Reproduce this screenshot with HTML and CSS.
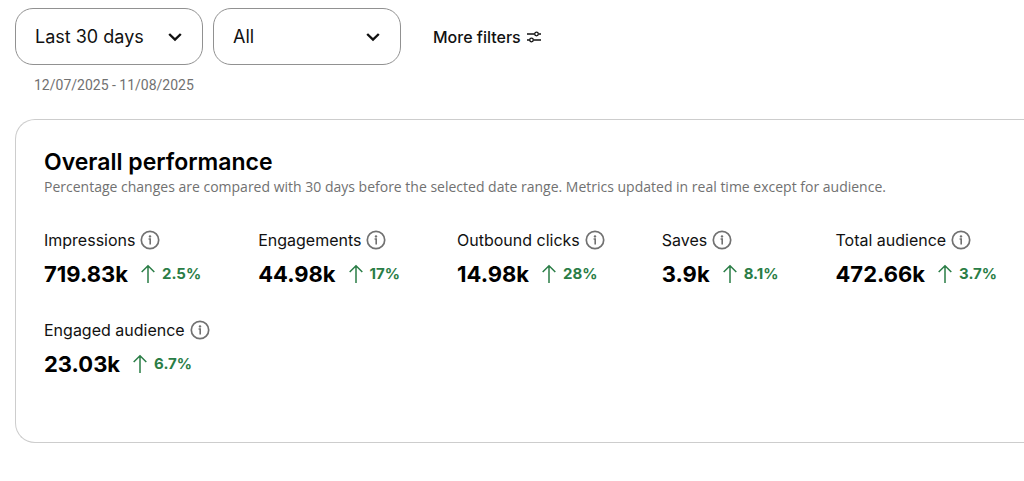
FILE: index.html
```html
<!DOCTYPE html>
<html lang="en">
<head>
  <meta charset="UTF-8">
  <meta name="viewport" content="width=device-width, initial-scale=1">
  <title>Analytics overview</title>
  <link rel="stylesheet" href="styles.css">
</head>
<body>

<!-- shared icons -->
<svg class="icon-defs" aria-hidden="true">
  <symbol id="chevron" viewBox="0 0 14 10">
    <path d="M1.2 2 L7 7.5 L12.8 2" fill="none" stroke="currentColor" stroke-width="2.4"/>
  </symbol>
  <symbol id="sliders" viewBox="0 0 16 12">
    <g fill="none" stroke="currentColor" stroke-width="1.3">
      <path d="M1 3 H8.5 M12.5 3 H15 M1 9 H3.5 M7.5 9 H15"/>
      <circle cx="10.5" cy="3" r="1.8"/>
      <circle cx="5.5" cy="9" r="1.8"/>
    </g>
  </symbol>
  <symbol id="info" viewBox="0 0 20 20">
    <circle cx="10" cy="10" r="8.7" fill="none" stroke="currentColor" stroke-width="1.7"/>
    <circle cx="10" cy="6.4" r="1.2" fill="currentColor"/>
    <path d="M8.6 9 H10.2 V14.4" fill="none" stroke="currentColor" stroke-width="1.6"/>
  </symbol>
  <symbol id="up" viewBox="0 0 14 20">
    <path d="M7 19 V2 M.7 8 L7 1.7 L13.3 8" fill="none" stroke="currentColor" stroke-width="1.5"/>
  </symbol>
</svg>

<div class="filters">
  <div class="select-box">
    <select aria-label="Date range">
      <option>Last 30 days</option>
    </select>
    <svg class="chevron"><use href="#chevron"/></svg>
  </div>
  <div class="select-box">
    <select aria-label="Content type">
      <option>All</option>
    </select>
    <svg class="chevron"><use href="#chevron"/></svg>
  </div>
  <button class="more-filters" type="button">
    More filters
    <svg class="sliders"><use href="#sliders"/></svg>
  </button>
</div>
<p class="date-range">12/07/2025 - 11/08/2025</p>

<section class="card">
  <h1>Overall performance</h1>
  <p class="note">Percentage changes are compared with 30 days before the selected date range. Metrics updated in real time except for audience.</p>

  <div class="metrics">
    <div class="metric">
      <div class="label">Impressions <button class="info" type="button" aria-label="About impressions"><svg><use href="#info"/></svg></button></div>
      <div class="value">719.83k <span class="change"><svg><use href="#up"/></svg>2.5%</span></div>
    </div>
    <div class="metric">
      <div class="label">Engagements <button class="info" type="button" aria-label="About engagements"><svg><use href="#info"/></svg></button></div>
      <div class="value">44.98k <span class="change"><svg><use href="#up"/></svg>17%</span></div>
    </div>
    <div class="metric">
      <div class="label">Outbound clicks <button class="info" type="button" aria-label="About outbound clicks"><svg><use href="#info"/></svg></button></div>
      <div class="value">14.98k <span class="change"><svg><use href="#up"/></svg>28%</span></div>
    </div>
    <div class="metric">
      <div class="label">Saves <button class="info" type="button" aria-label="About saves"><svg><use href="#info"/></svg></button></div>
      <div class="value">3.9k <span class="change"><svg><use href="#up"/></svg>8.1%</span></div>
    </div>
    <div class="metric">
      <div class="label">Total audience <button class="info" type="button" aria-label="About total audience"><svg><use href="#info"/></svg></button></div>
      <div class="value">472.66k <span class="change"><svg><use href="#up"/></svg>3.7%</span></div>
    </div>
    <div class="metric">
      <div class="label">Engaged audience <button class="info" type="button" aria-label="About engaged audience"><svg><use href="#info"/></svg></button></div>
      <div class="value">23.03k <span class="change"><svg><use href="#up"/></svg>6.7%</span></div>
    </div>
  </div>
</section>

</body>
</html>
```
FILE: styles.css
```css
* {
  box-sizing: border-box;
}
body {
  margin: 0;
  padding: 8px 0 0 15px;
  background: #fff;
  color: #111;
  font-family: Inter, "Liberation Sans", sans-serif;
}
button,
select {
  color: inherit;
  font-family: inherit;
}
h1,
p {
  margin: 0;
}
.icon-defs {
  display: none;
}

/* filter bar */
.filters {
  display: flex;
  align-items: center;
  gap: 10px;
}
.select-box {
  display: grid;
  align-items: center;
  width: 188px;
}
.select-box > * {
  grid-area: 1 / 1;
}
.select-box select {
  width: 100%;
  height: 57px;
  padding: 0 48px 0 19px;
  border: 1px solid #919191;
  border-radius: 18px;
  background: #fff;
  font-size: 18px;
  appearance: none;
}
.chevron {
  justify-self: end;
  width: 14px;
  height: 10px;
  margin-right: 21px;
  pointer-events: none;
}
.more-filters {
  display: flex;
  align-items: center;
  gap: 5px;
  margin-left: 22px;
  padding: 0;
  border: 0;
  background: none;
  font-size: 16px;
  font-weight: 500;
}
.sliders {
  width: 16px;
  height: 12px;
}
.date-range {
  padding: 10px 0 0 19px;
  color: #717171;
  font-family: Roboto, "Liberation Sans", sans-serif;
  font-size: 14px;
  line-height: 20px;
}

/* performance card */
.card {
  margin-top: 24px;
  padding: 28px 0 64px 28px;
  border: 1px solid #cdcdcd;
  border-right: 0;
  border-radius: 20px 0 0 20px;
}
.card h1 {
  color: #000;
  font-size: 23px;
  font-weight: 600;
  line-height: 28px;
}
.note {
  color: #717171;
  font-family: "Open Sans", "Liberation Sans", sans-serif;
  font-size: 14px;
  line-height: 22px;
}
.metrics {
  display: flex;
  flex-wrap: wrap;
  gap: 30px 57px;
  margin-top: 30px;
}
.label {
  display: flex;
  align-items: center;
  gap: 5px;
  font-size: 16px;
  line-height: 24px;
}
.info {
  display: flex;
  padding: 0;
  border: 0;
  background: none;
  color: #717171;
}
.info svg {
  width: 20px;
  height: 20px;
}
.value {
  display: flex;
  align-items: center;
  gap: 13px;
  margin-top: 8px;
  color: #000;
  font-size: 22px;
  font-weight: 700;
  line-height: 28px;
}
.change {
  display: flex;
  align-items: center;
  gap: 7px;
  color: #2a7d46;
  font-size: 15px;
  font-weight: 700;
}
.change svg {
  width: 14px;
  height: 20px;
}
```
